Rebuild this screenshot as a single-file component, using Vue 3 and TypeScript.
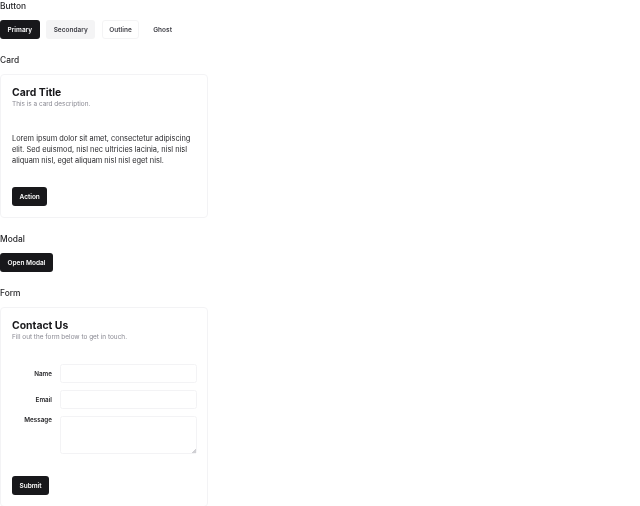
<script setup lang="ts">
const buttons: { label: string; kind: string }[] = [
  { label: 'Primary', kind: 'primary' },
  { label: 'Secondary', kind: 'secondary' },
  { label: 'Outline', kind: 'outline' },
  { label: 'Ghost', kind: 'ghost' },
]
</script>

<template>
  <main class="page">
    <section class="section">
      <h2 class="heading">Button</h2>
      <div class="row">
        <button v-for="b in buttons" :key="b.label" type="button" class="btn" :class="b.kind">{{ b.label }}</button>
      </div>
    </section>

    <section class="section">
      <h2 class="heading">Card</h2>
      <div class="card">
        <header class="card-head">
          <h3 class="title">Card Title</h3>
          <p class="desc">This is a card description.</p>
        </header>
        <p class="body">Lorem ipsum dolor sit amet, consectetur adipiscing elit. Sed euismod, nisl nec ultricies lacinia, nisl nisl aliquam nisl, eget aliquam nisl nisl eget nisl.</p>
        <footer class="card-foot">
          <button type="button" class="btn primary">Action</button>
        </footer>
      </div>
    </section>

    <section class="section">
      <h2 class="heading">Modal</h2>
      <div class="row">
        <button type="button" class="btn primary">Open Modal</button>
      </div>
    </section>

    <section class="section">
      <h2 class="heading">Form</h2>
      <div class="card">
        <header class="card-head">
          <h3 class="title">Contact Us</h3>
          <p class="desc">Fill out the form below to get in touch.</p>
        </header>
        <form class="form" @submit.prevent>
          <label class="label" for="name">Name</label>
          <input id="name" class="input" type="text" />
          <label class="label" for="email">Email</label>
          <input id="email" class="input" type="email" />
          <label class="label top" for="message">Message</label>
          <textarea id="message" class="input area"></textarea>
        </form>
        <footer class="card-foot form-foot">
          <button type="button" class="btn primary">Submit</button>
        </footer>
      </div>
    </section>
  </main>
</template>

<style scoped>
.page {
  width: 640px;
  height: 506px;
  overflow: hidden;
  font-family: Inter, "Liberation Sans", sans-serif;
  color: #18181b;
  will-change: transform;
}
.section { margin-bottom: 15px; }
.heading {
  margin: 0 0 8px;
  font-size: 8.4px;
  line-height: 12px;
  font-weight: 500;
  color: #27272a;
}
.row { display: flex; gap: 6.5px; }
.btn {
  height: 19px;
  padding: 1px 6.5px 0;
  border: 1px solid transparent;
  border-radius: 3px;
  font: 600 6.5px/1 Inter, sans-serif;
  cursor: pointer;
}
.primary { background: #18181b; color: #fafafa; }
.secondary { background: #f4f4f5; color: #3f3f46; }
.outline { background: #fff; color: #3f3f46; border-color: #f4f4f5; }
.ghost { background: transparent; color: #3f3f46; }
.card {
  width: 208px;
  box-sizing: border-box;
  border: 1px solid #f3f3f5;
  border-radius: 4px;
  padding: 11px;
}
.title {
  margin: 0;
  font-size: 10.4px;
  line-height: 13px;
  font-weight: 700;
}
.desc {
  margin: 1px 0 0;
  font-size: 6.45px;
  line-height: 9px;
  color: #8a8a93;
}
.body {
  margin: 24px 0 0;
  font-size: 7.4px;
  line-height: 11px;
  color: #27272a;
}
.card-foot { display: flex; margin-top: 21px; }
.form {
  margin-top: 22px;
  display: grid;
  grid-template-columns: 40px 1fr;
  column-gap: 8px;
  row-gap: 7px;
  align-items: center;
}
.label {
  text-align: right;
  font-size: 6.3px;
  font-weight: 600;
  color: #27272a;
}
.label.top { align-self: start; }
.input {
  display: block;
  box-sizing: border-box;
  width: 137px;
  height: 19px;
  margin: 0;
  border: 1px solid #f3f3f5;
  border-radius: 2.5px;
  background: #fff;
  outline: none;
}
.area { height: 38px; }
.area::-webkit-resizer {
  background: linear-gradient(135deg, transparent 84%, #d0d0d4 84%);
}
.form-foot { margin-top: 22px; }
</style>
